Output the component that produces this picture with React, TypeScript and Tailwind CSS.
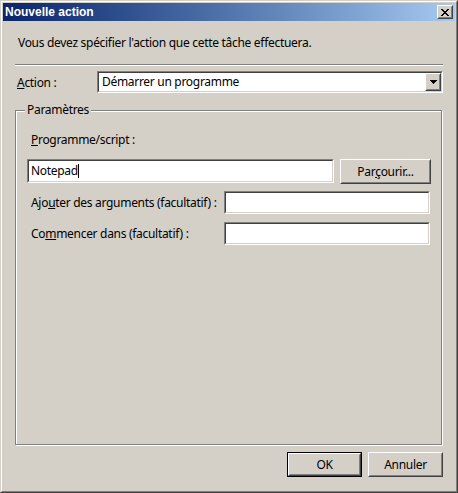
import React from "react";

const font = { fontFamily: '"Noto Sans", "DejaVu Sans", sans-serif' };

// Win classic bevels
const Raised: React.FC<{ className?: string; children?: React.ReactNode }> = ({ className = "", children }) => (
  <div className={`border border-t-white border-l-white border-b-[#404040] border-r-[#404040] ${className}`}>
    <div className="w-full h-full border border-t-[#d4d0c8] border-l-[#d4d0c8] border-b-[#808080] border-r-[#808080] bg-[#d4d0c8] flex items-center justify-center">
      {children}
    </div>
  </div>
);

const Sunken: React.FC<{ className?: string; children?: React.ReactNode }> = ({ className = "", children }) => (
  <div className={`border border-t-[#808080] border-l-[#808080] border-b-white border-r-white ${className}`}>
    <div className="w-full h-full border border-t-[#404040] border-l-[#404040] border-b-[#d4d0c8] border-r-[#d4d0c8] bg-white flex items-center">
      {children}
    </div>
  </div>
);

const CloseGlyph = () => {
  const rows = ["11000011", "01100110", "00111100", "00011000", "00111100", "01100110", "11000011"];
  return (
    <svg width="8" height="7" viewBox="0 0 8 7" shapeRendering="crispEdges">
      {rows.map((r, y) =>
        r.split("").map((c, x) => (c === "1" ? <rect key={`${x}-${y}`} x={x} y={y} width="1" height="1" fill="#000" /> : null))
      )}
    </svg>
  );
};

const DropArrow = () => (
  <svg width="7" height="4" viewBox="0 0 7 4" shapeRendering="crispEdges">
    <rect x="0" y="0" width="7" height="1" fill="#000" />
    <rect x="1" y="1" width="5" height="1" fill="#000" />
    <rect x="2" y="2" width="3" height="1" fill="#000" />
    <rect x="3" y="3" width="1" height="1" fill="#000" />
  </svg>
);

export default function App() {
  return (
    <div
      className="w-[458px] h-[493px] border border-t-[#d4d0c8] border-l-[#d4d0c8] border-b-[#404040] border-r-[#404040] text-[12px] tracking-[-0.3px] text-black leading-[16px] whitespace-nowrap"
      style={font}
    >
      <div className="w-full h-full border border-t-white border-l-white border-b-[#808080] border-r-[#808080] bg-[#d4d0c8] p-[1px] flex flex-col">
        {/* title bar */}
        <div className="h-[18px] bg-gradient-to-r from-[#0a246a] to-[#a6caf0] flex items-center pl-[2px] pr-[2px]">
          <span
            className="text-white font-bold text-[12px] tracking-normal flex-1"
            style={{ fontFamily: '"Liberation Sans", Arial, sans-serif' }}
          >
            Nouvelle action
          </span>
          <Raised className="w-[16px] h-[14px]">
            <CloseGlyph />
          </Raised>
        </div>

        {/* body */}
        <div className="flex flex-col px-[12px]">
          <p className="mt-[14px] pl-[3px]">Vous devez spécifier l'action que cette tâche effectuera.</p>

          <div className="mt-[13px] h-[2px] border-t border-t-[#808080] border-b border-b-white" />

          <div className="mt-[5px] flex items-center">
            <span className="w-[82px] pl-[2px] pt-[1px]">
              <u>A</u>ction :
            </span>
            <Sunken className="w-[346px] h-[22px]">
              <span className="flex-1 pl-[3px]">Démarrer un programme</span>
              <Raised className="w-[16px] h-[18px]">
                <DropArrow />
              </Raised>
            </Sunken>
          </div>

          {/* group box */}
          <div className="relative mt-[17px] h-[335px] w-[427px] border border-[#808080] shadow-[1px_1px_0_#fff,inset_1px_1px_0_#fff] pt-[21px] pl-[11px]">
            <span className="absolute -top-[9px] left-[9px] bg-[#d4d0c8] px-[2px]">Paramètres</span>

            <div className="pl-[4px]">
              <u>P</u>rogramme/script :
            </div>

            <div className="mt-[11px] flex items-start">
              <Sunken className="w-[307px] h-[24px]">
                <span className="pl-[2px]">Notepad</span>
                <span className="w-[1px] h-[14px] bg-black" />
              </Sunken>
              <Raised className="ml-[6px] w-[91px] h-[25px]">
                <span>
                  Par<u>ç</u>ourir...
                </span>
              </Raised>
            </div>

            <div className="mt-[7px] flex items-center">
              <span className="w-[197px] pl-[4px]">
                Ajo<u>u</u>ter des arguments (facultatif) :
              </span>
              <Sunken className="w-[206px] h-[23px]" />
            </div>

            <div className="mt-[8px] flex items-center">
              <span className="w-[197px] pl-[4px]">
                Co<u>m</u>mencer dans (facultatif) :
              </span>
              <Sunken className="w-[206px] h-[23px]" />
            </div>
          </div>

          <div className="mt-[7px] flex justify-end gap-[6px]">
            <div className="border border-black">
              <Raised className="w-[73px] h-[23px]">
                <span>OK</span>
              </Raised>
            </div>
            <Raised className="w-[75px] h-[25px]">
              <span>Annuler</span>
            </Raised>
          </div>
        </div>
      </div>
    </div>
  );
}
